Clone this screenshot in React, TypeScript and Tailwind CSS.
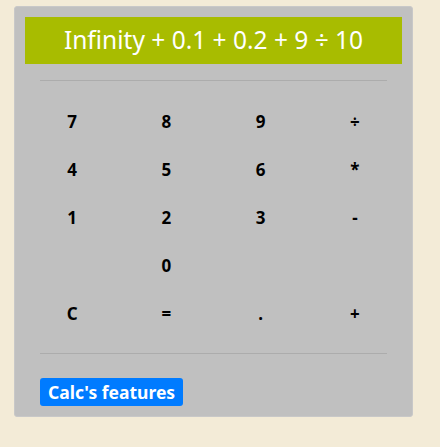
import React from "react";

const rows = [
  ["7", "8", "9", "÷"],
  ["4", "5", "6", "*"],
  ["1", "2", "3", "-"],
  ["", "0", "", ""],
  ["C", "=", ".", "+"],
];

export default function App() {
  return (
    <div
      className="w-[440px] h-[447px] bg-[#f3ebd7] pt-[6px] pl-[14px]"
      style={{ fontFamily: '"Noto Sans", "Open Sans", sans-serif' }}
    >
      <div className="w-[399px] h-[411px] bg-[#c0c0c0] rounded-[3px] border border-[#c8c8c8] pt-[10px] px-[10px]">
        <div className="h-[47px] bg-[#a8bc00] flex items-center justify-center text-white text-[24.5px] leading-none">
          Infinity + 0.1 + 0.2 + 9 ÷ 10
        </div>
        <div className="mx-[15px] mt-[16px] h-px bg-[#acacac]" />
        <div className="mt-[17px] grid grid-cols-4">
          {rows.map((r, i) =>
            r.map((k, j) => (
              <div
                key={i + "-" + j}
                className="h-[48px] flex items-center justify-center text-[17px] font-bold text-black"
              >
                {k}
              </div>
            ))
          )}
        </div>
        <div className="mx-[15px] mt-[15px] h-px bg-[#acacac]" />
        <div className="mx-[15px] mt-[24px]">
          <span className="inline-flex items-center h-[28px] px-[8px] rounded-[3px] bg-[#007bff] text-white font-bold text-[17.5px]">
            Calc's features
          </span>
        </div>
      </div>
    </div>
  );
}
